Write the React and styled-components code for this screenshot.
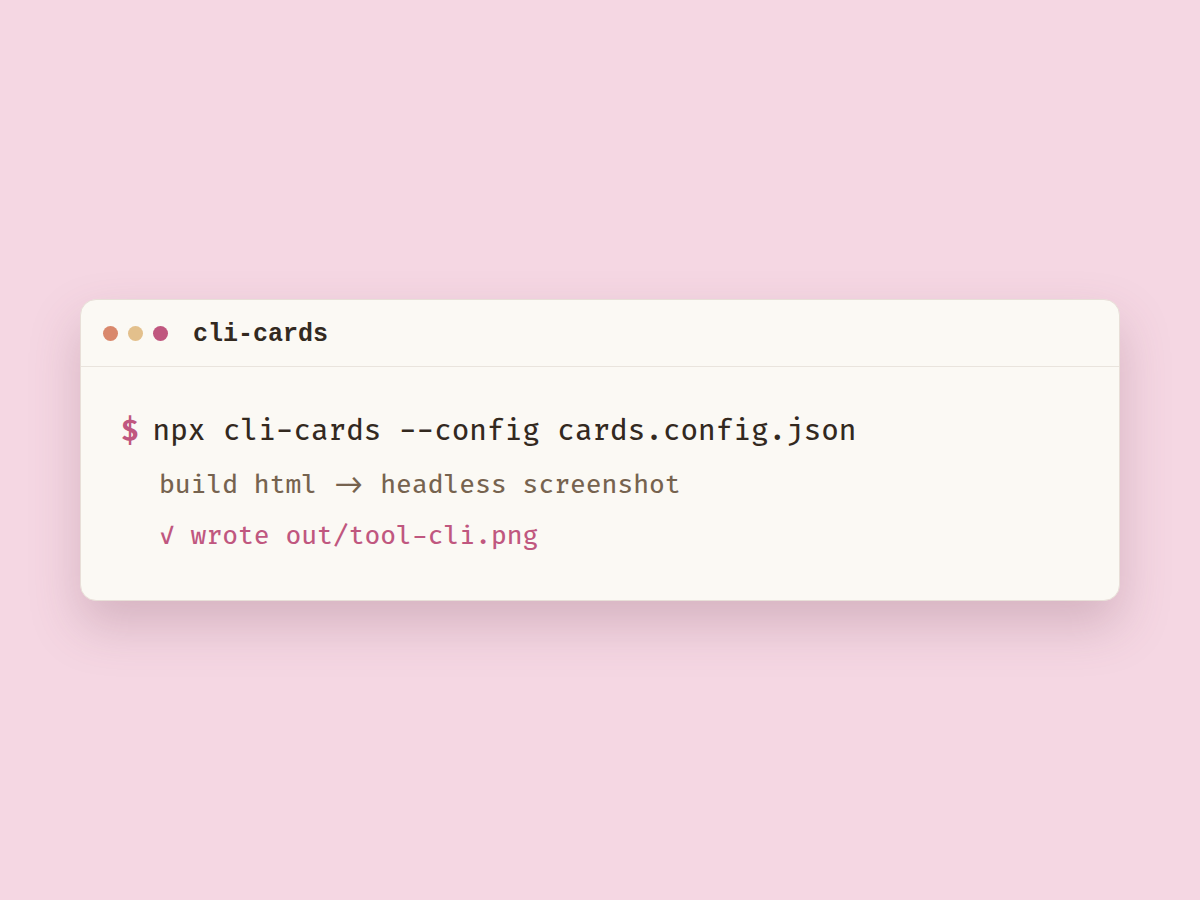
import React from "react";
import styled, { createGlobalStyle } from "styled-components";

const GlobalStyle = createGlobalStyle`
  html, body {
    margin: 0;
    padding: 0;
    background: #f5d7e3;
  }
`;

const Page = styled.div`
  width: 1200px;
  height: 900px;
  display: flex;
  align-items: center;
  justify-content: center;
  background: #f5d7e3;
`;

const Card = styled.div`
  width: 1040px;
  background: #fbf9f4;
  border: 1px solid #e8dfd8;
  border-radius: 16px;
  box-shadow: 0 24px 50px rgba(120, 70, 90, 0.25);
  overflow: hidden;
  box-sizing: border-box;
`;

const TitleBar = styled.div`
  height: 67px;
  display: flex;
  align-items: center;
  gap: 10px;
  padding: 3px 22px 0;
  border-bottom: 1px solid #e9e4dd;
  box-sizing: border-box;
`;

const Dot = styled.span`
  width: 15px;
  height: 15px;
  border-radius: 50%;
  margin-top: -2px;
  background: ${(p) => p.color};
`;

const Title = styled.span`
  margin-left: 15px;
  font-family: "Liberation Mono", monospace;
  font-weight: 700;
  font-size: 25px;
  color: #33291f;
`;

const Body = styled.div`
  padding: 42px 40px 38px;
  font-family: "Fira Code", "DejaVu Sans Mono", monospace;
  font-weight: 450;
`;

const Command = styled.div`
  font-size: 28.6px;
  color: #33291f;
  line-height: 46px;
  font-variant-ligatures: none;
`;

const Prompt = styled.span`
  color: #c0577f;
  font-weight: 700;
  margin-right: 14px;
`;

const Output = styled.div`
  font-size: 25.7px;
  line-height: 51px;
  padding-left: 38px;
  margin-top: ${(p) => (p.$first ? "5px" : "0")};
  color: ${(p) => p.color};
`;

export default function App() {
  return (
    <Page>
      <GlobalStyle />
      <Card>
        <TitleBar>
          <Dot color="#d9886c" />
          <Dot color="#e3c08c" />
          <Dot color="#c0577f" />
          <Title>cli-cards</Title>
        </TitleBar>
        <Body>
          <Command>
            <Prompt>$</Prompt>npx cli-cards --config cards.config.json
          </Command>
          <Output $first color="#76634f">
            build html -&gt; headless screenshot
          </Output>
          <Output color="#c0577f">✓ wrote out/tool-cli.png</Output>
        </Body>
      </Card>
    </Page>
  );
}
